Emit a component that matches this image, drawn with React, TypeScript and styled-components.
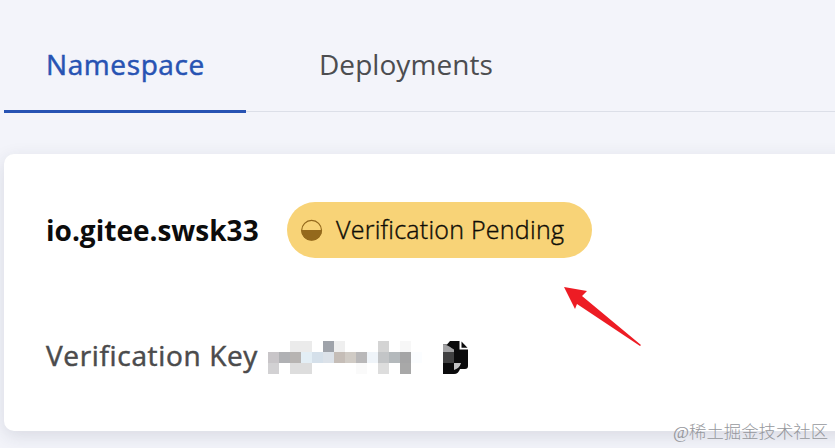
import React from 'react';
import styled, { createGlobalStyle } from 'styled-components';

const GlobalStyle = createGlobalStyle`
  * {
    box-sizing: border-box;
  }
  body {
    margin: 0;
    background: #f3f4fa;
    font-family: 'Open Sans', 'Noto Sans', sans-serif;
    overflow: hidden;
  }
`;

const Page = styled.div`
  position: relative;
  height: 448px;
  padding-left: 4px;
  overflow: hidden;
`;

const Tabs = styled.div`
  display: flex;
  height: 113px;
  background: linear-gradient(#dcdfe8, #dcdfe8) 0 111px / 100% 1px no-repeat;
`;

const Tab = styled.div<{ $active?: boolean }>`
  width: ${(p) => (p.$active ? '242px' : '280px')};
  padding: ${(p) => (p.$active ? '44px 0 0 42px' : '44px 0 0 73px')};
  border-bottom: 3px solid ${(p) => (p.$active ? '#2753b3' : 'transparent')};
  color: ${(p) => (p.$active ? '#2753b3' : '#4c4d50')};
  font-size: 28px;
  line-height: 40px;
  letter-spacing: ${(p) => (p.$active ? '0.6px' : '0.05px')};
  -webkit-text-stroke: ${(p) => (p.$active ? '0.5px' : '0')};
  white-space: nowrap;
`;

const Card = styled.div`
  width: 860px;
  height: 277px;
  margin-top: 41px;
  padding: 48px 0 0 42px;
  border-radius: 10px;
  background: #fff;
  box-shadow: 0 5px 18px rgba(40, 45, 70, 0.13);
`;

const Row = styled.div`
  display: flex;
  align-items: center;
  height: 56px;
`;

const KeyRow = styled(Row)`
  align-items: flex-start;
  margin-top: 70px;
  padding-top: 13px;
`;

const Name = styled.div`
  width: 241px;
  color: #0c0c0c;
  font-size: 28px;
  font-weight: 700;
  line-height: 40px;
  white-space: nowrap;
`;

const Badge = styled.div`
  display: flex;
  align-items: center;
  gap: 13px;
  width: 305px;
  height: 56px;
  padding: 0 0 1px 14px;
  border-radius: 28px;
  background: #f8d377;
  color: #0e0c06;
  font-size: 25px;
  font-weight: 300;
  letter-spacing: 0.25px;
  -webkit-text-stroke: 0.4px;
  white-space: nowrap;
`;

const BadgeText = styled.span`
  padding-bottom: 2px;
`;

const KeyLabel = styled.div`
  width: 222px;
  margin-top: -6px;
  color: #4b4b4c;
  font-size: 28px;
  line-height: 40px;
  letter-spacing: 0.65px;
  -webkit-text-stroke: 0.5px;
  white-space: nowrap;
`;

const KeyValue = styled.svg`
  margin-right: 32px;
`;

const Arrow = styled.svg`
  position: absolute;
  left: 560px;
  top: 284px;
`;

const Watermark = styled.div`
  position: absolute;
  left: 673px;
  top: 420px;
  color: #96989d;
  font-family: 'Liberation Serif', 'Noto Sans CJK SC', serif;
  font-size: 17.4px;
  font-weight: 300;
  line-height: 24px;
  white-space: nowrap;
`;

// [column, row, colour] on an 11px grid
const cells: [number, number, string][] = [
  [2, 0, '#ebebeb'],
  [3, 0, '#ebebeb'],
  [5, 0, '#9fa3aa'],
  [6, 0, '#efefef'],
  [10, 0, '#d4d4d4'],
  [12, 0, '#f7f7f7'],
  [0, 1, '#c8c5c8'],
  [1, 1, '#b0b1b4'],
  [2, 1, '#b7b4b2'],
  [3, 1, '#e3eef5'],
  [4, 1, '#d5e0ea'],
  [5, 1, '#dce2e9'],
  [6, 1, '#c5bdb7'],
  [7, 1, '#d0cbc5'],
  [8, 1, '#b9b8b9'],
  [9, 1, '#eff4f9'],
  [10, 1, '#c3c5c7'],
  [11, 1, '#b4b9bc'],
  [12, 1, '#a5a5a6'],
  [13, 1, '#fbfdff'],
  [0, 2, '#d2d1d3'],
  [2, 2, '#dddddd'],
  [3, 2, '#dddddd'],
  [8, 2, '#fafafa'],
  [10, 2, '#dddddd'],
  [12, 2, '#a8a8a8'],
];

const HalfCircle: React.FC = () => (
  <svg width="22" height="22" viewBox="0 0 22 22">
    <circle cx="10.6" cy="11.3" r="9.9" fill="none" stroke="#94691c" strokeWidth="1.2" />
    <path d="M0.1 11h21a10.5 10.5 0 0 1-21 0z" fill="#94691c" />
  </svg>
);

const CopyIcon: React.FC = () => (
  <svg width="26" height="33" viewBox="0 0 26 33">
    <path
      d="M7 0h9.5v8.5H25V25a3 3 0 0 1-3 3h-5c-1 3-3 5-6 5H0V3.5h4z"
      fill="#0b0b0c"
    />
    <path d="M18.5 0.5l6 6.3h-6z" fill="#0b0b0c" />
    <path d="M0 3.5c4 0 8 3 11 5v2.5H0z" fill="#a3a3a5" />
    <path d="M0 11h11v11H0z" fill="#404041" />
    <path d="M11 22h7c-1 4-4 6-7 7z" fill="#c3c3c4" />
  </svg>
);

const App: React.FC = () => {
  return (
    <>
      <GlobalStyle />
      <Page>
        <Tabs>
          <Tab $active>Namespace</Tab>
          <Tab>Deployments</Tab>
        </Tabs>
        <Card>
          <Row>
            <Name>io.gitee.swsk33</Name>
            <Badge>
              <HalfCircle />
              <BadgeText>Verification Pending</BadgeText>
            </Badge>
          </Row>
          <KeyRow>
            <KeyLabel>Verification Key</KeyLabel>
            <KeyValue width="143" height="33" overflow="visible" shapeRendering="crispEdges">
              {cells.map(([x, y, fill]) => (
                <rect key={`${x}-${y}`} x={x * 11} y={y * 11} width="11" height="11" fill={fill} />
              ))}
            </KeyValue>
            <CopyIcon />
          </KeyRow>
        </Card>
        <Arrow width="84" height="66" viewBox="0 0 84 66">
          <path d="M4 3L27 7L22 12L81 61L80 62L17 20L15 25z" fill="#ed1c24" />
        </Arrow>
        <Watermark>@稀土掘金技术社区</Watermark>
      </Page>
    </>
  );
};

export default App;
